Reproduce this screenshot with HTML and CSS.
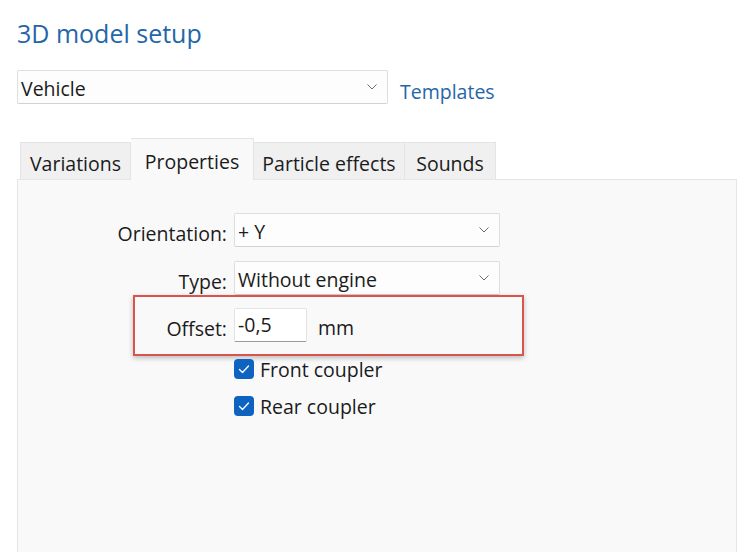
FILE: index.html
```html
<!DOCTYPE html>
<html>
<head>
<meta charset="utf-8">
<link rel="stylesheet" href="styles.css">
</head>
<body>
<div class="page">
  <h1 class="title">3D model setup</h1>
  <div class="top-row">
    <div class="select select-wide">
      <span class="select-text">Vehicle</span>
      <svg class="chev" width="10" height="6" viewBox="0 0 10 6"><polyline points="0.5,0.5 5,5 9.5,0.5" fill="none" stroke="#6b6b6b" stroke-width="1"/></svg>
    </div>
    <a class="link">Templates</a>
  </div>
  <div class="tabs">
    <div class="tab tab-variations">Variations</div>
    <div class="tab tab-active">Properties</div>
    <div class="tab tab-particle">Particle effects</div>
    <div class="tab tab-sounds">Sounds</div>
  </div>
  <div class="panel">
    <div class="row">
      <span class="label">Orientation:</span>
      <div class="select select-form">
        <span class="select-text">+ Y</span>
        <svg class="chev" width="10" height="6" viewBox="0 0 10 6"><polyline points="0.5,0.5 5,5 9.5,0.5" fill="none" stroke="#6b6b6b" stroke-width="1"/></svg>
      </div>
    </div>
    <div class="row row-type">
      <span class="label label-low">Type:</span>
      <div class="select select-form">
        <span class="select-text">Without engine</span>
        <svg class="chev" width="10" height="6" viewBox="0 0 10 6"><polyline points="0.5,0.5 5,5 9.5,0.5" fill="none" stroke="#6b6b6b" stroke-width="1"/></svg>
      </div>
    </div>
    <div class="row row-offset">
      <span class="label">Offset:</span>
      <div class="input">-0,5</div>
      <span class="unit">mm</span>
      <div class="highlight"></div>
    </div>
    <div class="row row-check">
      <span class="label"></span>
      <span class="checkbox"><svg width="20" height="20" viewBox="0 0 20 20"><polyline points="5.5,10.5 8.5,13.5 14.5,7" fill="none" stroke="#ffffff" stroke-width="1.3" stroke-linecap="round" stroke-linejoin="round"/></svg></span>
      <span class="check-text">Front coupler</span>
    </div>
    <div class="row row-check row-check2">
      <span class="label"></span>
      <span class="checkbox"><svg width="20" height="20" viewBox="0 0 20 20"><polyline points="5.5,10.5 8.5,13.5 14.5,7" fill="none" stroke="#ffffff" stroke-width="1.3" stroke-linecap="round" stroke-linejoin="round"/></svg></span>
      <span class="check-text">Rear coupler</span>
    </div>
  </div>
</div>
</body>
</html>
```

FILE: styles.css
```css
html, body {
  margin: 0;
  padding: 0;
  background: #ffffff;
  overflow: hidden;
}

.page {
  width: 750px;
  height: 552px;
  overflow: hidden;
  font-family: "Open Sans", "Noto Sans", sans-serif;
  font-size: 19.5px;
  color: #1b1b1b;
  padding-top: 16px;
  box-sizing: border-box;
}

.title {
  margin: 0 0 0 17px;
  font-size: 25px;
  font-weight: 400;
  line-height: 34px;
  color: #2566a9;
}

.top-row {
  display: flex;
  align-items: center;
  height: 34px;
  margin: 20px 0 0 17px;
}

.select {
  display: flex;
  align-items: center;
  justify-content: space-between;
  box-sizing: border-box;
  height: 34px;
  background: #fdfdfd;
  border: 1px solid #dedede;
  border-bottom-color: #d2d2d2;
  border-radius: 2px;
  padding: 0 10px 0 3px;
}

.select-wide {
  width: 371px;
}

.select-text {
  position: relative;
  top: 2px;
  line-height: 32px;
  white-space: nowrap;
}

.chev {
  display: block;
  flex: none;
}

.link {
  position: relative;
  top: 5px;
  margin-left: 12px;
  color: #2566a9;
  font-size: 19.5px;
  line-height: 34px;
}

.tabs {
  display: flex;
  align-items: flex-end;
  margin: 34px 0 0 20px;
  height: 41px;
  position: relative;
  z-index: 1;
}

.tab {
  box-sizing: border-box;
  height: 37px;
  padding: 4px 0 0;
  line-height: 33px;
  text-align: center;
  background: #f0f0f0;
  border: 1px solid #e4e4e4;
  border-bottom: none;
  white-space: nowrap;
}

.tab + .tab {
  border-left: none;
}

.tab-variations {
  width: 111px;
}

.tab-particle {
  width: 151px;
}

.tab-sounds {
  width: 91px;
}

.tab-active {
  width: 123px;
  height: 42px;
  margin-bottom: -1px;
  padding: 5px 0 0;
  line-height: 36px;
  background: #f9f9f9;
  border: 1px solid #e4e4e4;
  border-bottom: none;
}

.tab-active + .tab {
  border-left: none;
}

.panel {
  box-sizing: border-box;
  margin-left: 17px;
  width: 720px;
  height: 400px;
  background: #f9f9f9;
  border: 1px solid #e6e6e6;
  padding-top: 33px;
}

.row {
  display: flex;
  align-items: center;
  position: relative;
}

.label {
  position: relative;
  top: 3px;
  width: 209px;
  flex: none;
  margin-right: 7px;
  text-align: right;
  white-space: nowrap;
}

.label-low {
  top: 3px;
}

.select-form {
  width: 266px;
}

.row-type {
  margin-top: 14px;
}

.row-offset {
  margin-top: 13px;
}

.input {
  box-sizing: border-box;
  width: 73px;
  height: 34px;
  background: #ffffff;
  border: 1px solid #e3e3e3;
  border-bottom: 1px solid #9a9a9a;
  border-radius: 2px;
  padding: 1px 3px 0;
  line-height: 30px;
}

.unit {
  position: relative;
  top: 3px;
  margin-left: 11px;
  line-height: 34px;
}

.highlight {
  position: absolute;
  left: 115px;
  top: -13px;
  width: 391px;
  height: 61px;
  box-sizing: border-box;
  border: 2px solid #d9534f;
  box-shadow: 0 2px 5px rgba(0, 0, 0, 0.25);
  pointer-events: none;
}

.row-check {
  margin-top: 17px;
  height: 20px;
}

.row-check2 {
  margin-top: 17px;
}

.row-check .label {
  top: 0;
}

.checkbox {
  width: 20px;
  height: 20px;
  flex: none;
  border-radius: 4px;
  background: #0f63c0;
  display: flex;
}

.checkbox svg {
  display: block;
}

.check-text {
  position: relative;
  top: 1px;
  margin-left: 6px;
  line-height: 20px;
  white-space: nowrap;
}
```
